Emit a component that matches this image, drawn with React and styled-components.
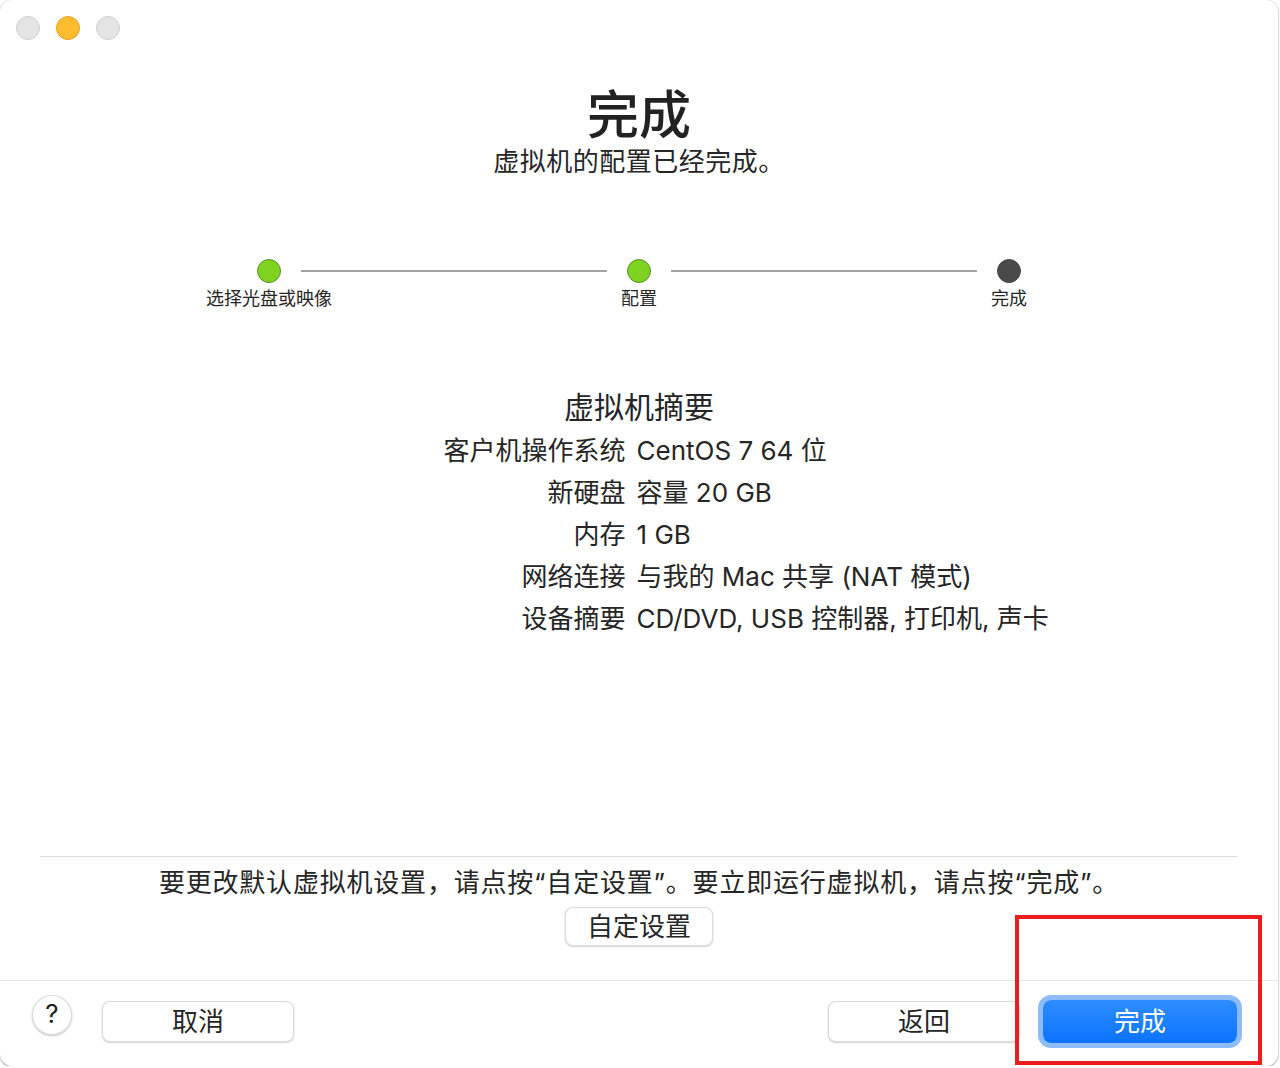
import React from "react";
import styled, { createGlobalStyle } from "styled-components";

const Global = createGlobalStyle`
  html, body { margin: 0; padding: 0; background: #ffffff; }
  body {
    font-family: "Inter", "Noto Sans CJK SC", sans-serif;
    color: #262626;
    -webkit-font-smoothing: antialiased;
  }
`;

const Window = styled.div`
  position: relative;
  width: 1278px;
  height: 1066px;
  background: #ffffff;
  border-radius: 12px;
  box-shadow: 0 0 0 1px rgba(0, 0, 0, 0.06), 0 1px 2px rgba(0, 0, 0, 0.35);
  display: flex;
  flex-direction: column;
  overflow: hidden;
`;

const TitleBar = styled.div`
  height: 56px;
  box-sizing: border-box;
  padding: 16px 0 0 16px;
  display: flex;
  gap: 16px;
`;

const Light = styled.span`
  width: 24px;
  height: 24px;
  box-sizing: border-box;
  border-radius: 50%;
  background: ${(p) => (p.$active ? "#febc2e" : "#e4e4e4")};
  border: 1px solid ${(p) => (p.$active ? "#e2a328" : "#cfcfcf")};
`;

const Header = styled.header`
  margin-top: 30px;
  display: flex;
  flex-direction: column;
  align-items: center;
`;

const Title = styled.h1`
  margin: 0;
  font-size: 52px;
  line-height: 60px;
  font-weight: 500;
  color: #222;
`;

const Subtitle = styled.p`
  margin: 0;
  font-size: 26px;
  line-height: 32px;
  letter-spacing: 0.5px;
  color: #262626;
`;

const Stepper = styled.div`
  margin-top: 81px;
  display: flex;
  justify-content: center;
  align-items: flex-start;
`;

const Step = styled.div`
  width: 64px;
  display: flex;
  flex-direction: column;
  align-items: center;
`;

const Dot = styled.span`
  width: 24px;
  height: 24px;
  box-sizing: border-box;
  border-radius: 50%;
  background: ${(p) => (p.$done ? "#7ed321" : "#4a4a4a")};
  border: 1px solid ${(p) => (p.$done ? "#5c8f2c" : "#4a4a4a")};
`;

const StepLabel = styled.span`
  margin-top: 4px;
  white-space: nowrap;
  font-size: 18px;
  line-height: 24px;
  color: #262626;
`;

const Connector = styled.span`
  width: 306px;
  height: 2px;
  margin-top: 11px;
  background: #a3a3a3;
`;

const Summary = styled.section`
  margin-top: 76px;
  display: flex;
  flex-direction: column;
  align-items: center;
`;

const SummaryTitle = styled.h2`
  margin: 0 0 3px;
  font-size: 30px;
  line-height: 40px;
  font-weight: 400;
  color: #262626;
`;

const SummaryGrid = styled.dl`
  margin: 0;
  width: 100%;
  box-sizing: border-box;
  padding-right: 16px;
  display: grid;
  grid-template-columns: minmax(0, 1fr) minmax(0, 1fr);
  column-gap: 11px;
  font-size: 26px;
  line-height: 42px;
`;

const Term = styled.dt`
  text-align: right;
  white-space: nowrap;
`;

const Value = styled.dd`
  margin: 0;
  white-space: nowrap;
`;

const Bottom = styled.div`
  margin-top: auto;
  display: flex;
  flex-direction: column;
  align-items: center;
`;

const Divider = styled.hr`
  align-self: stretch;
  margin: 0 ${(p) => p.$inset}px;
  border: none;
  height: 1px;
  background: ${(p) => p.$color};
`;

const Hint = styled.p`
  margin: 10px 0 8px;
  font-size: 26px;
  line-height: 32px;
  letter-spacing: 0.8px;
  color: #262626;
`;

const Button = styled.button`
  box-sizing: border-box;
  width: ${(p) => p.$w}px;
  height: 40px;
  border-radius: 8px;
  border: 0.5px solid rgba(0, 0, 0, 0.14);
  background: #ffffff;
  box-shadow: 0 1px 2px rgba(0, 0, 0, 0.18);
  font-family: inherit;
  font-size: 26px;
  line-height: 1;
  color: #262626;
  padding: 0;
`;

const CustomButton = styled(Button)`
  margin-bottom: 34px;
  height: 39px;
`;

const Footer = styled.footer`
  height: 85px;
  box-sizing: border-box;
  padding: 14px 41px 0 32px;
  display: flex;
  align-items: flex-start;
`;

const Help = styled.button`
  width: 40px;
  height: 40px;
  box-sizing: border-box;
  border-radius: 50%;
  border: 0.5px solid rgba(0, 0, 0, 0.14);
  background: #fff;
  box-shadow: 0 1px 2px rgba(0, 0, 0, 0.22);
  font-family: "Inter", sans-serif;
  font-size: 26px;
  line-height: 1;
  color: #222;
  padding: 0 0 3px;
  margin-right: 30px;
`;

const FooterButton = styled(Button)`
  height: 41px;
  margin-top: 6px;
`;

const Spacer = styled.div`
  flex: 1;
`;

const Primary = styled.button`
  box-sizing: border-box;
  width: 194px;
  height: 43px;
  margin: 5px 0 0 23px;
  border: none;
  border-radius: 8px;
  background: linear-gradient(#2e8dff, #0b73ff);
  box-shadow: 0 0 0 5px rgba(30, 120, 245, 0.5);
  color: #ffffff;
  font-family: inherit;
  font-size: 26px;
  line-height: 1;
  padding: 0;
`;

const Annotation = styled.div`
  position: absolute;
  left: 1015px;
  top: 915px;
  width: 247px;
  height: 150px;
  box-sizing: border-box;
  border: 4px solid #ee1b1f;
  pointer-events: none;
`;

const rows = [
  ["客户机操作系统", "CentOS 7 64 位"],
  ["新硬盘", "容量 20 GB"],
  ["内存", "1 GB"],
  ["网络连接", "与我的 Mac 共享 (NAT 模式)"],
  ["设备摘要", "CD/DVD, USB 控制器, 打印机, 声卡"],
];

export default function App() {
  return (
    <>
      <Global />
      <Window lang="zh-CN">
        <TitleBar>
          <Light />
          <Light $active />
          <Light />
        </TitleBar>
        <Header>
          <Title>完成</Title>
          <Subtitle>虚拟机的配置已经完成。</Subtitle>
        </Header>
        <Stepper>
          <Step>
            <Dot $done />
            <StepLabel>选择光盘或映像</StepLabel>
          </Step>
          <Connector />
          <Step>
            <Dot $done />
            <StepLabel>配置</StepLabel>
          </Step>
          <Connector />
          <Step>
            <Dot />
            <StepLabel>完成</StepLabel>
          </Step>
        </Stepper>
        <Summary>
          <SummaryTitle>虚拟机摘要</SummaryTitle>
          <SummaryGrid>
            {rows.map(([k, v]) => (
              <React.Fragment key={k}>
                <Term>{k}</Term>
                <Value>{v}</Value>
              </React.Fragment>
            ))}
          </SummaryGrid>
        </Summary>
        <Bottom>
          <Divider $inset={40} $color="#dcdcdc" />
          <Hint>要更改默认虚拟机设置，请点按“自定设置”。要立即运行虚拟机，请点按“完成”。</Hint>
          <CustomButton $w={148}>自定设置</CustomButton>
          <Divider $inset={0} $color="#e6e6e6" />
        </Bottom>
        <Footer>
          <Help>?</Help>
          <FooterButton $w={192}>取消</FooterButton>
          <Spacer />
          <FooterButton $w={192}>返回</FooterButton>
          <Primary>完成</Primary>
        </Footer>
        <Annotation />
      </Window>
    </>
  );
}
